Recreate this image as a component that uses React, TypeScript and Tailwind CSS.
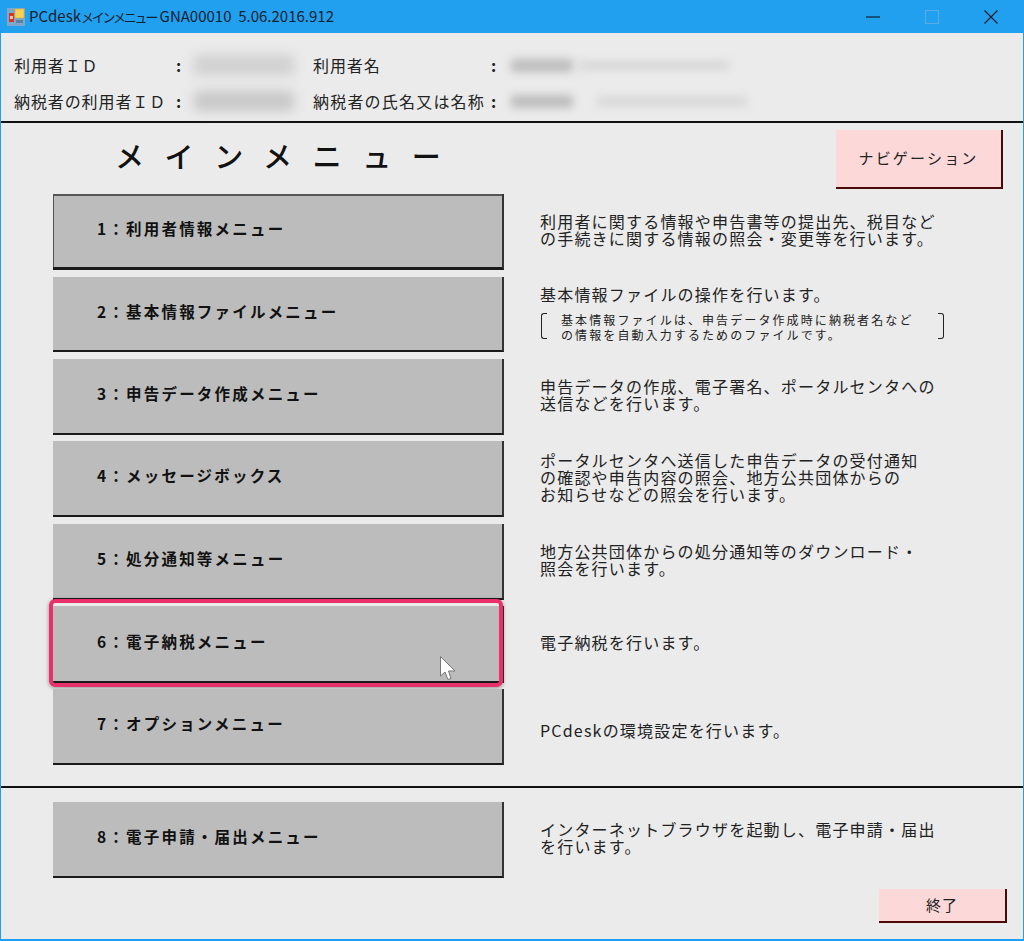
import React from 'react';

const jp = { fontFamily: '"Noto Sans CJK JP", "Liberation Sans", sans-serif' };

const MenuRow = ({ label, h, mb, children, highlight, focused }: { label: string; h: string; mb: string; children: React.ReactNode; highlight?: boolean; focused?: boolean }) => (
  <div className={`flex items-stretch ${h} ${mb}`}>
    <div className={`relative w-[451px] shrink-0 ml-[52px] bg-[#bcbcbc] border-b-[#1a1a1a] border-r-2 border-r-[#333] flex items-center pl-[44px] ${focused ? 'border-b-[3px] shadow-[inset_1px_2px_0_#555]' : 'border-b-2'}`}>
      <span className="text-[15.5px] tracking-[2.2px] font-bold text-[#111] -mt-[4px] whitespace-nowrap">{label}</span>
      {highlight && (
        <>
          <div className="absolute -left-[4px] -top-[7px] w-[454px] h-[88px] border-[4px] border-[#e8306a] rounded-[6px] shadow-[0_1px_4px_rgba(0,0,0,0.4)]" />
          <svg className="absolute left-[386px] top-[49px]" width="18" height="26" viewBox="0 0 18 26">
            <path d="M1.5 1.5 V21 L6 17 L9 24.5 L12 23.5 L9.5 16 L16 16 Z" fill="#fff" stroke="#777" strokeWidth="1" />
          </svg>
        </>
      )}
    </div>
    <div className="ml-[36px] pb-[4px] flex-1 flex flex-col justify-center">{children}</div>
  </div>
);

const Desc = ({ children, className = '' }: { children: React.ReactNode; className?: string }) => (
  <p className={`text-[16px] leading-[17px] tracking-[1.2px] text-[#222] whitespace-nowrap ${className}`}>{children}</p>
);

export default function App() {
  return (
    <div className="w-[1024px] h-[941px] flex flex-col border border-t-0 border-[#1ea0f0] border-b-[2px] bg-[#ebebeb] text-[#222] overflow-hidden" style={jp}>
      {/* title bar */}
      <div className="h-[33px] shrink-0 -mx-px bg-[#22a0f0] flex items-center pl-[7px] text-[15px]">
        <svg width="18" height="18" viewBox="0 0 18 18" className="shrink-0">
          <rect x="0" y="0" width="18" height="18" fill="#7fa8c8" />
          <rect x="8" y="1" width="9" height="9" fill="#f7d154" stroke="#c8a030" strokeWidth="0.5" />
          <rect x="2" y="5" width="5" height="9" fill="#d9342b" />
          <rect x="3" y="8" width="3" height="3" fill="#f4c0b0" />
          <rect x="9" y="12" width="7" height="3" fill="#5a7ea8" />
        </svg>
        <span className="ml-[4px] text-[#13212c] whitespace-nowrap">PCdesk<span className="text-[13px] tracking-[-2.2px]">メインメニュー</span> GNA00010 &nbsp;5.06.2016.912</span>
        <div className="ml-auto flex items-center text-[#10202c]">
          <svg width="14" height="14" viewBox="0 0 14 14" className="mr-[45px]"><path d="M0 7 H14" stroke="currentColor" strokeWidth="1.2" /></svg>
          <svg width="14" height="14" viewBox="0 0 14 14" className="mr-[45px]"><rect x="0.5" y="0.5" width="13" height="13" fill="none" stroke="#5cabde" strokeWidth="1" /></svg>
          <svg width="14" height="14" viewBox="0 0 14 14" className="mr-[26px]"><path d="M0.5 0.5 L13.5 13.5 M13.5 0.5 L0.5 13.5" stroke="currentColor" strokeWidth="1.2" /></svg>
        </div>
      </div>

      {/* user info */}
      <div className="h-[90px] shrink-0 border-b-2 border-[#111] -mx-px pl-[14px] pt-[14px] text-[16px] leading-[36px]">
        <div className="flex h-[36px] items-center">
          <span className="w-[162px] tracking-[0.9px] whitespace-pre">利用者ＩＤ</span>
          <span className="w-[10px] font-bold">:</span>
          <div className="w-[100px] h-[20px] mx-[8px] bg-[#d0d0d0] blur-[6px]" />
          <span className="ml-[11px] w-[178px] tracking-[0.9px]">利用者名</span>
          <span className="w-[10px] font-bold">:</span>
          <div className="ml-[10px] w-[62px] h-[13px] bg-[#bdbdbd] blur-[4px]" />
          <div className="ml-[6px] w-[150px] h-[9px] bg-[#d6d6d6] blur-[4px]" />
        </div>
        <div className="flex h-[36px] items-center">
          <span className="w-[162px] tracking-[0.9px] whitespace-nowrap">納税者の利用者ＩＤ</span>
          <span className="w-[10px] font-bold">:</span>
          <div className="w-[100px] h-[20px] mx-[8px] bg-[#c8c8c8] blur-[6px]" />
          <span className="ml-[11px] w-[178px] tracking-[1.2px] whitespace-nowrap">納税者の氏名又は名称</span>
          <span className="w-[10px] font-bold">:</span>
          <div className="ml-[10px] w-[62px] h-[13px] bg-[#bdbdbd] blur-[4px]" />
          <div className="ml-[24px] w-[150px] h-[9px] bg-[#d6d6d6] blur-[4px]" />
        </div>
      </div>

      {/* main title + navigation */}
      <div className="relative h-[71px] shrink-0 pl-[114px]">
        <h1 className="text-[29px] leading-[64px] tracking-[20.6px] text-[#111] font-medium whitespace-nowrap">メインメニュー</h1>
        <div className="absolute left-[835px] top-[7px] w-[167px] h-[59px] bg-[#fcd8d8] border-r-2 border-b-2 border-[#4a0a0a] flex items-center justify-center text-[15px] tracking-[2.2px]">ナビゲーション</div>
      </div>

      <MenuRow label="1：利用者情報メニュー" h="h-[76px]" mb="mb-[7px]" focused>
        <Desc>利用者に関する情報や申告書等の提出先、税目など</Desc>
        <Desc>の手続きに関する情報の照会・変更等を行います。</Desc>
      </MenuRow>
      <MenuRow label="2：基本情報ファイルメニュー" h="h-[75px]" mb="mb-[7px]">
        <Desc className="mb-[9px]">基本情報ファイルの操作を行います。</Desc>
        <div className="relative w-[404px] h-[28px] pl-[21px] text-[12px] leading-[15px] tracking-[2.1px] whitespace-nowrap">
          <div className="absolute left-[1px] top-[1px] w-[6px] h-[26px] border-l border-t border-b border-[#222] rounded-l-[3px]" />
          <div className="absolute right-0 top-[1px] w-[6px] h-[26px] border-r border-t border-b border-[#222] rounded-r-[3px]" />
          <p>基本情報ファイルは、申告データ作成時に納税者名など</p>
          <p>の情報を自動入力するためのファイルです。</p>
        </div>
      </MenuRow>
      <MenuRow label="3：申告データ作成メニュー" h="h-[76px]" mb="mb-[6px]">
        <Desc>申告データの作成、電子署名、ポータルセンタへの</Desc>
        <Desc>送信などを行います。</Desc>
      </MenuRow>
      <MenuRow label="4：メッセージボックス" h="h-[76px]" mb="mb-[7px]">
        <Desc>ポータルセンタへ送信した申告データの受付通知</Desc>
        <Desc>の確認や申告内容の照会、地方公共団体からの</Desc>
        <Desc>お知らせなどの照会を行います。</Desc>
      </MenuRow>
      <MenuRow label="5：処分通知等メニュー" h="h-[76px]" mb="mb-[6px]">
        <Desc>地方公共団体からの処分通知等のダウンロード・</Desc>
        <Desc>照会を行います。</Desc>
      </MenuRow>
      <MenuRow label="6：電子納税メニュー" h="h-[77px]" mb="mb-[6px]" highlight>
        <Desc>電子納税を行います。</Desc>
      </MenuRow>
      <MenuRow label="7：オプションメニュー" h="h-[76px]" mb="mb-[21px]">
        <Desc className="mt-[11px] tracking-[0.9px]">PCdeskの環境設定を行います。</Desc>
      </MenuRow>

      <div className="h-[2px] shrink-0 -mx-px bg-[#111] mb-[14px]" />

      <MenuRow label="8：電子申請・届出メニュー" h="h-[76px]" mb="mb-[11px]">
        <Desc>インターネットブラウザを起動し、電子申請・届出</Desc>
        <Desc>を行います。</Desc>
      </MenuRow>

      <div className="flex justify-end pr-[16px]">
        <div className="w-[128px] h-[34px] bg-[#fcd8d8] border-r-2 border-b-2 border-[#4a0a0a] flex items-center justify-center text-[15px] tracking-[1px]">終了</div>
      </div>
    </div>
  );
}
